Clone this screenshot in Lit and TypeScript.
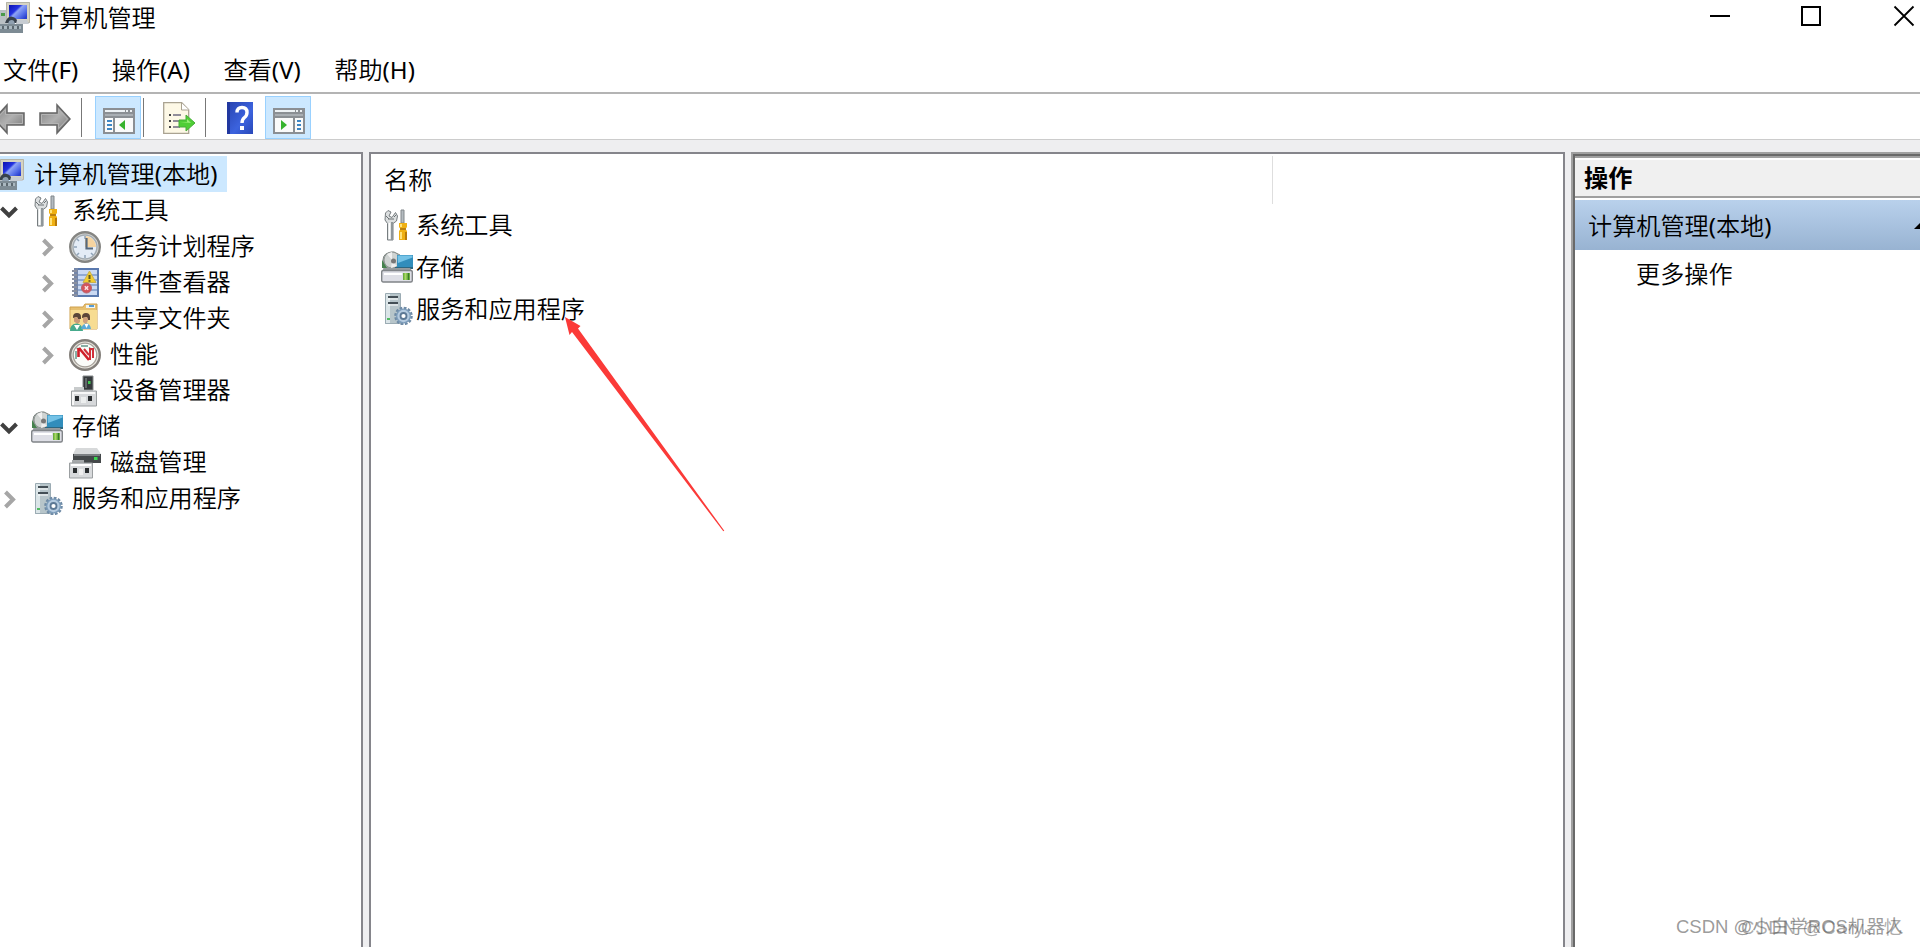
import { LitElement, html, css, svg } from 'lit';
import { customElement, property } from 'lit/decorators.js';

const ICONS: Record<string, unknown> = {
  computer: svg`
    <defs><linearGradient id="scr" x1="0" y1="0" x2="1" y2=".8"><stop offset="0" stop-color="#0c10b0"/><stop offset=".4" stop-color="#2433e0"/><stop offset=".5" stop-color="#8fa4f4"/><stop offset=".75" stop-color="#5a74ea"/><stop offset="1" stop-color="#2a40d0"/></linearGradient></defs>
    <path d="M1 9h9v14H1z" fill="#b9c0c4"/><path d="M2 12h4v3H2z" fill="#4a9a4a"/>
    <path d="M7 1h24v21H7z" fill="#d6d3c2"/><path d="M7.500 1.500h23v20h-23z" fill="none" stroke="#b4b4a8"/>
    <path d="M10 4h18v14H10z" fill="url(#scr)"/>
    <path d="M6 22q3-8 8-6 4 1 5 6z" fill="#38424c"/><path d="M10 20q3-2 5 0l1 3H9z" fill="#8fa0b0"/><path d="M18 19h10l2 4H17z" fill="#c6ccd2"/>
    <path d="M0 23h24v9H0z" fill="#7d8b94"/><path d="M1 25h21v3H1z" fill="#aab8c0"/>
    <path d="M4 25v3M9 25v3M14 25v3M19 25v3" stroke="#5c6870" stroke-width="2"/>`,
  tools: svg`
    <path d="M4.500 4 7 1.500l3 1.500-2 4 3 1.500 3.500-5 2 3.500-1 5-3.500 2.500V31H6.500V14.500L4 11z" fill="#dcdfe0" stroke="#777d80"/>
    <path d="M8.500 14v16" stroke="#fff" stroke-width="1.500"/><path d="M11 13v18" stroke="#8f9699" stroke-width="2"/>
    <path d="M7 10h6M5 7l3 3M13 8l2-2" stroke="#6a7073"/>
    <path d="M20 1h3v13h-3z" fill="#b4bbc0" stroke="#81878a"/><path d="M18 14h8v4l-1.500 2 1.500 2v9h-8v-9l1.500-2-1.500-2z" fill="#efb013"/>
    <path d="M20 15v3m0 5v7" stroke="#ffe27a" stroke-width="2"/><path d="M25 23v8" stroke="#b87a08" stroke-width="2"/><path d="M19 20h6" stroke="#a87010" stroke-width="1.500"/>`,
  clock: svg`
    <circle cx="16" cy="16" r="14.800" fill="#d9d9d6" stroke="#858582" stroke-width="2.400"/>
    <circle cx="16" cy="16" r="12" fill="#e4ecf6" stroke="#a4acb2" stroke-width="1.500"/>
    <path d="M16 16V5a11 11 0 0 1 11 11z" fill="#f6d4a0"/>
    <path d="M16 5v3M16 24v3M5 16h3M8 8l2 2M8 24l2-2M24 24l-2-2" stroke="#8fa3b8" stroke-width="1.500"/>
    <path d="M17.500 7v10.500H24" fill="none" stroke="#56687c" stroke-width="2.200"/>`,
  event: svg`
    <path d="M5 1h25v29H5z" fill="#5a79ae"/><path d="M9 3h19v25H9z" fill="#cad9f2"/>
    <path d="M9 8h19M9 13h19M9 18h19M9 23h19" stroke="#7d99c8" stroke-width="1.500"/>
    <path d="M5 1h4v29H5z" fill="#7486a8"/>
    <path d="M3 4h5M3 8h5M3 12h5M3 16h5M3 20h5M3 24h5M3 28h5" stroke="#8a90a0" stroke-width="2"/>
    <path d="M20.500 4 27 15.500H14z" fill="#f2cc30" stroke="#c8b050"/><path d="M20.500 8v4m0 1.200v1.500" stroke="#5a5420" stroke-width="2"/>
    <circle cx="17.500" cy="21" r="5" fill="#d4545c" stroke="#b8646c"/><path d="m15.800 19.300 3.400 3.400m0-3.400-3.400 3.400" stroke="#fbe4e6" stroke-width="1.500"/>`,
  share: svg`
    <path d="M1 4h13l2-3h12v25H1z" fill="#e7c070" stroke="#cfa04c"/><path d="M1.500 7H28v19H1.500z" fill="#f7dc92"/>
    <path d="M17 2h9v3h-9z" fill="#eef4f8"/><path d="M20 2h5v2h-5z" fill="#5a9cd0"/>
    <path d="M4 14q0-4 4-4t4 4v2H9l-1-2-4 1z" fill="#5a4638"/><path d="M5 15l3-1 1 2h2v3L8.500 21 5 18.500z" fill="#c99a78"/>
    <path d="M13 14q0-4 4-4t4 4v3h-2l-1-3-5 1z" fill="#5c4638"/><path d="M14 15l4-1 1 3-1 3-1.500 1-2.500-2z" fill="#cfa07c"/>
    <path d="M1 28q0-7 6-7.500T14 28z" fill="#46aa8c"/><path d="M12 26q1-5 5-5.500t5 5.500z" fill="#5aaad8"/><path d="m5 22 3 5 3-5zM15.500 21l2 4 2-4z" fill="#fff"/>`,
  perf: svg`
    <circle cx="16" cy="16" r="14.800" fill="#e8e5de" stroke="#837f7a" stroke-width="2.400"/>
    <circle cx="16" cy="16" r="11.800" fill="#fbfcf9" stroke="#a5a099" stroke-width="1.300"/>
    <path d="M7 20v-8M7.500 9.500h4M12 7h7M20 8.500l4 3v4" fill="none" stroke="#64968a" stroke-width="1.500"/>
    <path d="M9.500 9v9M10 9l10 12" fill="none" stroke="#d0202a" stroke-width="2.600"/><path d="M15 10l5 6m1 5V10h3v9" fill="none" stroke="#d0303a" stroke-width="2"/>`,
  device: svg`
    <path d="M14 1h10v14H14z" fill="#363a3c" stroke="#85898b"/><path d="M16 3h2v10h-2z" fill="#646a6c"/><path d="M19 6h2.500v3H19z" fill="#43c852"/>
    <path d="M5 12h10v5H5z" fill="#c8cbcc"/><path d="M2.500 16h25v15h-25z" fill="#d6d8da" stroke="#9a9ea0"/>
    <path d="M4 18h22M4 17v13" stroke="#f7f7f7" stroke-width="2"/><path d="M6 21h4v5H6zM19 21h4v5h-4z" fill="#2b2e30"/><path d="M12 22h5v6h-5z" fill="#eceeee"/>`,
  storage: svg`
    <path d="M2 9q0-8 11-8l6 3v13H2z" fill="#a2aaa8" stroke="#808884"/><circle cx="11" cy="9" r="8" fill="#cfd3d2" stroke="#8f9694"/>
    <path d="m11 9-5-6 5-2zM11 10l5 5-6 2z" fill="#efefef"/><circle cx="12.500" cy="10" r="2.500" fill="#777"/><path d="M1 9v8h5z" fill="#45824d"/>
    <path d="M16 4h16v12H16z" fill="#318dbb"/><path d="M16.500 4.500h15v2L17 12z" fill="#74c2e6"/><path d="M14 16h18v2H14z" fill="#2c6680"/>
    <path d="M3 17h26l3 4H0z" fill="#969c9f"/><rect x=".7" y="19.500" width="30.600" height="11.500" rx="1.500" fill="#dedfe6" stroke="#808488" stroke-width="1.400"/>
    <path d="M3 22h18v2H3z" fill="#fff"/><path d="M22 22h7v7h-7z" fill="#6cae3e"/><path d="M24.500 22v7" stroke="#a9d864" stroke-width="2"/><path d="M27.500 22v7" stroke="#397c29"/>`,
  disk: svg`
    <path d="m7 1 21 0 4 6H4z" fill="#d7d9da"/><path d="M4 7h28v9H4z" fill="#44484a"/><path d="M5 7h26v2H5z" fill="#7c8083"/><path d="M25 10h3.500v3H25z" fill="#3bd651"/>
    <path d="M3 13h12v5H3z" fill="#a5a8aa"/><path d="M.5 16h23v15H.5z" fill="#d8dadc" stroke="#9b9fa1"/>
    <path d="M2 18h20" stroke="#fff" stroke-width="2"/><path d="M4 21h4v5H4zM16 21h4v5h-4z" fill="#292c2e"/><path d="M10 22h4v6h-4z" fill="#eee"/>`,
  service: svg`
    <path d="M4 1h16v30H4z" fill="#b7c5ca"/><path d="M5 1h4v30H5z" fill="#dbe5e8"/><path d="M4.500.5h15v30h-15z" fill="none" stroke="#9babb3"/>
    <path d="M7 4h10M7 10h10" stroke="#444f56" stroke-width="2"/><path d="M7 6h10M7 12h10" stroke="#fff"/><path d="M6 25h3v2H6z" fill="#50bb61"/>
    <circle cx="22.500" cy="23" r="8" fill="none" stroke="#6f8ba6" stroke-width="2.600" stroke-dasharray="2.700 1.488"/>
    <circle cx="22.500" cy="23" r="6.800" fill="#b4cadf" stroke="#7c9cba" stroke-width="1.300"/><circle cx="22.500" cy="23" r="3" fill="#fff" stroke="#5c7894" stroke-width="1.800"/>`,
  back: svg`
    <defs><linearGradient id="ar" x1="0" y1="0" x2="1" y2="1"><stop offset="0" stop-color="#808080"/><stop offset=".5" stop-color="#b0b0b0"/><stop offset="1" stop-color="#707070"/></linearGradient></defs>
    <path d="M1 16 14 2v8h17v12H14v8z" fill="url(#ar)" stroke="#666" stroke-width="1.500"/><path d="m3.500 16 9-9.500V11.500h17v9h-17v5z" fill="none" stroke="#b4b4b4"/>`,
  forward: svg`
    <defs><linearGradient id="ar" x1="0" y1="0" x2="1" y2="1"><stop offset="0" stop-color="#808080"/><stop offset=".5" stop-color="#b0b0b0"/><stop offset="1" stop-color="#707070"/></linearGradient></defs>
    <path d="M31 16 18 2v8H1v12h17v8z" fill="url(#ar)" stroke="#666" stroke-width="1.500"/><path d="m28.500 16-9-9.500V11.500h-17v9h17v5z" fill="none" stroke="#b4b4b4"/>`,
  winleft: svg`
    <path d="M0 6h32v26H0z" fill="#8b8f94"/><path d="M2 8h20v2H2zM23 8h2v2h-2zM27 8h2v2h-2z" fill="#eef2f5"/><path d="M2 12h28v2H2z" fill="#a9aeb3"/>
    <path d="M2 16h8v14H2zM12 16h18v14H12z" fill="#fafafa"/><path d="M4 19h5M4 23h5M4 27h5" stroke="#3d86c4" stroke-width="2"/><path d="M22 18v10l-6-5z" fill="#35b22c"/>`,
  winright: svg`
    <path d="M0 6h32v26H0z" fill="#8b8f94"/><path d="M2 8h20v2H2zM23 8h2v2h-2zM27 8h2v2h-2z" fill="#eef2f5"/><path d="M2 12h28v2H2z" fill="#a9aeb3"/>
    <path d="M2 16h18v14H2zM22 16h8v14h-8z" fill="#fafafa"/><path d="M24 19h4M24 23h4M24 27h4" stroke="#3d86c4" stroke-width="2"/><path d="M8 18v10l6-5z" fill="#35b22c"/>`,
  exportlist: svg`
    <path d="M.7.7h18l7 7v23.600H.7z" fill="#fdf8e6" stroke="#aaa392" stroke-width="1.300"/><path d="M18.500 1v7H26" fill="#fff" stroke="#aaa392"/>
    <path d="M6 13h2M6 19h2M6 25h2" stroke="#444" stroke-width="2"/><path d="M10 13h8M10 19h7M10 25h7" stroke="#6e6a80" stroke-width="1.600"/>
    <path d="M16 18h7v-5l9 8-9 8v-4h-7z" fill="#4fce35" stroke="#47ac38"/><path d="M17 20h7v-3l4 4z" fill="#9aee78"/>`,
  help: svg`
    <defs><linearGradient id="hp" x1="0" y1="0" x2="1" y2="1"><stop offset="0" stop-color="#2742ae"/><stop offset=".6" stop-color="#3c63de"/><stop offset="1" stop-color="#2848b8"/></linearGradient></defs>
    <path d="M0 0h26v32H0z" fill="url(#hp)"/><path d="M0 0h3v32H0z" fill="#2138a0"/>
    <path d="M10 10.500Q10 5.500 15 5.500t5 5q0 3-2.500 5T15 21" fill="none" stroke="#fff" stroke-width="3.400"/><path d="M13 24h4v4h-4z" fill="#fff"/>`,
};

@customElement('mmc-icon')
class MmcIcon extends LitElement {
  @property() name = '';
  static styles = css`
    :host { display: block; flex: none; width: 32px; height: 32px; }
    svg { display: block; }
  `;
  render() {
    return html`<svg width="32" height="32" viewBox="0 0 32 32">${ICONS[this.name]}</svg>`;
  }
}

interface TreeNode { level: number; icon: string; label: string; state?: 'open' | 'closed'; selected?: boolean; }

const TREE: TreeNode[] = [
  { level: 0, icon: 'computer', label: '计算机管理(本地)', selected: true },
  { level: 1, icon: 'tools', label: '系统工具', state: 'open' },
  { level: 2, icon: 'clock', label: '任务计划程序', state: 'closed' },
  { level: 2, icon: 'event', label: '事件查看器', state: 'closed' },
  { level: 2, icon: 'share', label: '共享文件夹', state: 'closed' },
  { level: 2, icon: 'perf', label: '性能', state: 'closed' },
  { level: 2, icon: 'device', label: '设备管理器' },
  { level: 1, icon: 'storage', label: '存储', state: 'open' },
  { level: 2, icon: 'disk', label: '磁盘管理' },
  { level: 1, icon: 'service', label: '服务和应用程序', state: 'closed' },
];

const LIST = [
  ['tools', '系统工具'],
  ['storage', '存储'],
  ['service', '服务和应用程序'],
];

const MENU = ['文件(F)', '操作(A)', '查看(V)', '帮助(H)'];

@customElement('app-root')
class AppRoot extends LitElement {
  static styles = css`
    :host {
      display: flex; flex-direction: column; position: relative;
      width: 1920px; height: 947px; overflow: hidden; background: #fff; color: #000;
      font: 350 24.150px/36px "Noto Sans", "Noto Sans CJK SC", sans-serif;
      white-space: nowrap;
    }
    * { box-sizing: border-box; }
    .latin { font-weight: 400; }
    .titlebar { display: flex; height: 36px; flex: none; }
    .titlebar mmc-icon { margin: 1px 4px 0 -1px; }
    .caption { flex: 1; }
    .controls { display: block; }
    .menu { display: flex; gap: 33.500px; height: 56px; flex: none; padding: 16px 0 0 3px; }
    .toolbar {
      display: flex; height: 48px; flex: none; align-items: center;
      border-top: 2px solid #b4b4b4; border-bottom: 1px solid #ccc; overflow: hidden;
      padding-top: 2px;
    }
    .back { margin-left: -7px; }
    .forward { margin-left: 14px; }
    .back, .forward { padding-top: 1px; }
    .sep { width: 1px; height: 39px; background: #777; }
    .sep.first { margin-left: 10px; }
    .tool { width: 46px; height: 43px; padding: 5px 7px; border: 1px solid #99d1ff; background: #cce8ff; }
    .tool.tree { margin: 0 2px 0 13px; }
    .tool.pane { margin-left: 6px; }
    .export { margin: 0 10px 0 19px; }
    .help { margin-left: 21px; }
    .work { display: flex; flex: 1; min-height: 0; padding-top: 12px; background: #eeeef0; }
    .tree-pane { width: 363px; border: solid #85858b; border-width: 2px 2px 0 0; background: #fff; padding-top: 2px; }
    .node { display: flex; height: 36px; align-items: center; line-height: 36px; }
    .node.selected { width: 227px; background: #cce8ff; }
    .twist { flex: none; width: 31px; height: 36px; }
    .level0 .twist { display: none; }
    .level0 mmc-icon { margin: 0 9px 0 -7px; }
    .level1 mmc-icon, .level2 mmc-icon { margin: 1px 9px 0 0; }
    .level2 { padding-left: 38px; }
    .list-pane { width: 1196px; margin-left: 6px; border: 2px solid #85858b; border-bottom: 0; background: #fff; }
    .header { width: 902px; height: 48px; margin-top: 2px; border-right: 1px solid #dedede; padding: 6px 0 0 13px; }
    .item { display: flex; height: 42px; align-items: center; gap: 3px; padding: 0 0 1px 10px; }
    .action-pane { flex: 1; margin-left: 6px; border: solid #a0a0a0; border-width: 2px 0 0 2px; }
    .inner { height: 100%; border: solid #696969; border-width: 2px 0 0 2px; background: #fff; }
    .action-title { height: 42px; border-top: 2px solid #a0a0a0; border-bottom: 2px solid #a0a0a0; background: #f0f0f0; box-shadow: inset 0 2px #fff; padding: 2px 0 0 9px; font-weight: 700; }
    .group { display: flex; height: 50px; margin-top: 2px; align-items: center; justify-content: space-between; padding: 2px 0 0 13px; background: linear-gradient(#b9d1ec, #98b3d2); overflow: hidden; }
    .more { padding: 6px 0 0 61px; }
    .arrow { position: absolute; left: 545px; top: 300px; }
    .mark { position: absolute; left: 1676px; top: 914px; font: 18.500px/26px "Liberation Sans", "Noto Sans CJK SC", sans-serif; color: rgba(90, 90, 90, .62); }
    .mark.second { left: 1741px; top: 915px; letter-spacing: .8px; color: rgba(90, 90, 90, .5); }
  `;

  private label(text: string) {
    return html`<span>${text.split(/([()A-Z]+)/).map((part, i) => (i % 2 ? html`<span class="latin">${part}</span>` : part))}</span>`;
  }

  private twist(state?: string) {
    if (!state) return html`<span class="twist"></span>`;
    return html`<svg class="twist" width="31" height="36" viewBox="0 0 31 36">
      ${state === 'open'
        ? svg`<path d="m1.500 16 7.500 7.500 7.500-7.500" fill="none" stroke="#404040" stroke-width="4"/>`
        : svg`<path d="m5.500 12 7.500 7.500-7.500 7.500" fill="none" stroke="#a6a6a6" stroke-width="4"/>`}
    </svg>`;
  }

  render() {
    return html`
      <div class="titlebar">
        <mmc-icon name="computer"></mmc-icon><span class="caption">计算机管理</span>
        <svg class="controls" width="220" height="36" viewBox="0 0 220 36" fill="none" stroke="#000">
          <path d="M10 16h20" stroke-width="2"/><path d="M102 7h18v18h-18z" stroke-width="2"/><path d="m194.500 6.500 19 19m0-19-19 19" stroke-width="1.800"/>
        </svg>
      </div>
      <div class="menu">${MENU.map(m => this.label(m))}</div>
      <div class="toolbar">
        <mmc-icon class="back" name="back"></mmc-icon>
        <mmc-icon class="forward" name="forward"></mmc-icon>
        <span class="sep first"></span>
        <span class="tool tree"><mmc-icon name="winleft"></mmc-icon></span>
        <span class="sep"></span>
        <mmc-icon class="export" name="exportlist"></mmc-icon>
        <span class="sep"></span>
        <mmc-icon class="help" name="help"></mmc-icon>
        <span class="tool pane"><mmc-icon name="winright"></mmc-icon></span>
      </div>
      <div class="work">
        <div class="tree-pane">
          ${TREE.map(n => html`<div class="node level${n.level} ${n.selected ? 'selected' : ''}">
            ${this.twist(n.state)}<mmc-icon name=${n.icon}></mmc-icon>${this.label(n.label)}</div>`)}
        </div>
        <div class="list-pane">
          <div class="header">名称</div>
          ${LIST.map(([icon, label]) => html`<div class="item"><mmc-icon name=${icon}></mmc-icon><span>${label}</span></div>`)}
        </div>
        <div class="action-pane"><div class="inner">
          <div class="action-title">操作</div>
          <div class="group">${this.label('计算机管理(本地)')}<svg width="6" height="12" viewBox="0 0 6 12"><path d="M0 9 6 3v6z"/></svg></div>
          <div class="more">更多操作</div>
        </div></div>
      </div>
      <svg class="arrow" width="200" height="240" viewBox="0 0 200 240"><path d="M20 17 35.500 26 33 28.500 179.300 230.800 178.300 231.300 27 32 24.500 35z" fill="#fb3a38"/></svg>
      <span class="mark">CSDN @小白学ROS机器人</span>
      <span class="mark second">CSDN @Cary、忆</span>
    `;
  }
}
